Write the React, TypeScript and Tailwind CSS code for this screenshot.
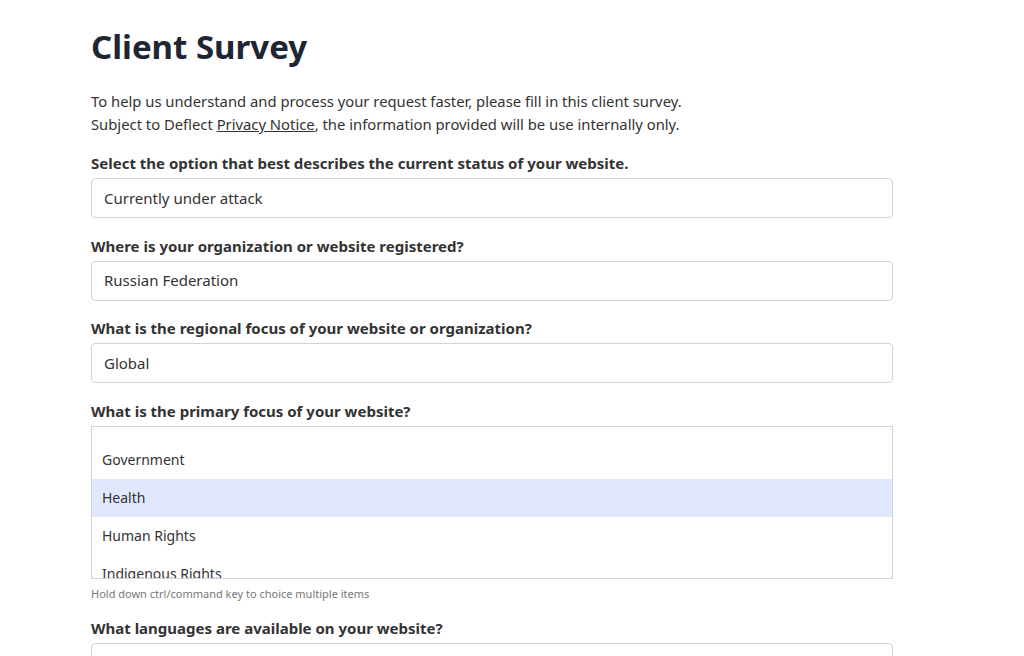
import React from 'react';

const focusOptions = ['Government', 'Health', 'Human Rights', 'Indigenous Rights', 'Journalism', 'LGBTQI+'];

function Field({ label, value }: { label: string; value: string }) {
    return (
        <div className="mb-[16.5px]">
            <label className="block text-[15px] font-bold leading-[22px] mb-[4px] text-[#333]">{label}</label>
            <div className="h-10 w-full border border-[#cfd4da] rounded-[4px] px-3 flex items-center text-[15px] text-[#333]">
                {value}
            </div>
        </div>
    );
}

export default function App() {
    return (
        <div className="min-h-screen bg-white" style={{ fontFamily: '"Noto Sans", "Liberation Sans", sans-serif' }}>
            <div className="w-[802px] ml-[91px] pt-[24px]">
                <h1 className="text-[33px] font-bold leading-[46px] text-[#1e2533]">Client Survey</h1>
                <p className="mt-[20px] text-[14.8px] leading-[23px] text-[#333]">
                    To help us understand and process your request faster, please fill in this client survey.
                    <br />
                    Subject to Deflect <a href="#" className="underline">Privacy Notice</a>, the information provided will be use internally only.
                </p>
                <div className="mt-[16px]">
                    <Field label="Select the option that best describes the current status of your website." value="Currently under attack" />
                    <Field label="Where is your organization or website registered?" value="Russian Federation" />
                    <Field label="What is the regional focus of your website or organization?" value="Global" />

                    <div className="mb-[15px]">
                        <label className="block text-[15px] font-bold leading-[22px] mb-[4px] text-[#333]">
                            What is the primary focus of your website?
                        </label>
                        <div className="h-[153px] w-full border border-[#cfd4da] pt-[14px] overflow-hidden">
                            {focusOptions.map(opt => (
                                <div
                                    key={opt}
                                    className={`h-[38px] px-[10px] flex items-center text-[14px] text-[#333] ${
                                        opt === 'Health' ? 'bg-[#e1e7fd]' : ''
                                    }`}
                                >
                                    {opt}
                                </div>
                            ))}
                        </div>
                        <p className="mt-[7px] text-[11px] leading-[16px] text-[#777]">
                            Hold down ctrl/command key to choice multiple items
                        </p>
                    </div>

                    <Field label="What languages are available on your website?" value="" />
                </div>
            </div>
        </div>
    );
}
